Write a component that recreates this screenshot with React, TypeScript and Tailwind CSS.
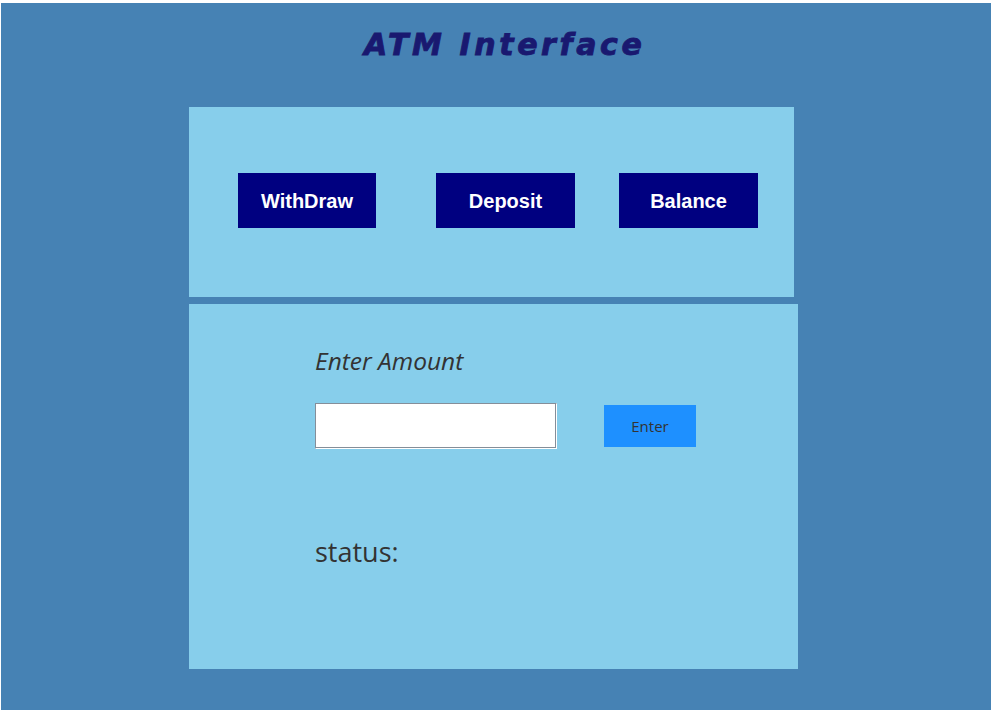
export default function App() {
  return (
    <div className="w-[991px] h-[710px] bg-white pt-[3px] pl-[1px] overflow-hidden">
      <div className="w-[990px] h-[707px] bg-[#4682b4] flex flex-col">
        <div className="h-[104px] pl-[363px] pt-[22px]">
          <h1
            className="text-[30px] leading-[40px] font-bold italic text-[#191970] tracking-[3.6px] whitespace-nowrap [-webkit-text-stroke:0.9px_#191970]"
            style={{ fontFamily: '"DejaVu Sans", sans-serif' }}
          >
            ATM Interface
          </h1>
        </div>
        <div className="ml-[188px] w-[605px] h-[190px] bg-[#87ceeb] flex items-start pt-[66px] pl-[49px]" style={{ fontFamily: '"Liberation Sans", Arial, sans-serif' }}>
          <button className="w-[138px] h-[55px] bg-[#000080] text-white font-bold text-[20px]">WithDraw</button>
          <button className="ml-[60px] w-[139px] h-[55px] bg-[#000080] text-white font-bold text-[20px]">Deposit</button>
          <button className="ml-[44px] w-[139px] h-[55px] bg-[#000080] text-white font-bold text-[20px]">Balance</button>
        </div>
        <div className="ml-[188px] mt-[7px] w-[609px] h-[365px] bg-[#87ceeb] pl-[126px] pt-[41px] text-[#333333]" style={{ fontFamily: '"Open Sans", sans-serif' }}>
          <div className="text-[24.5px] leading-[32px] italic">Enter Amount</div>
          <div className="flex items-center mt-[26px]">
            <input
              type="text"
              className="w-[242px] h-[46px] bg-white border border-t-[#858e99] border-l-[#858e99] border-b-white border-r-white shadow-[inset_-1px_-1px_0_#858e99] outline-none"
            />
            <button className="ml-[47px] w-[92px] h-[42px] bg-[#1e90ff] text-[#333333] text-[15px]">Enter</button>
          </div>
          <div className="mt-[85px] text-[27px] leading-[36px]">status:</div>
        </div>
      </div>
    </div>
  );
}
